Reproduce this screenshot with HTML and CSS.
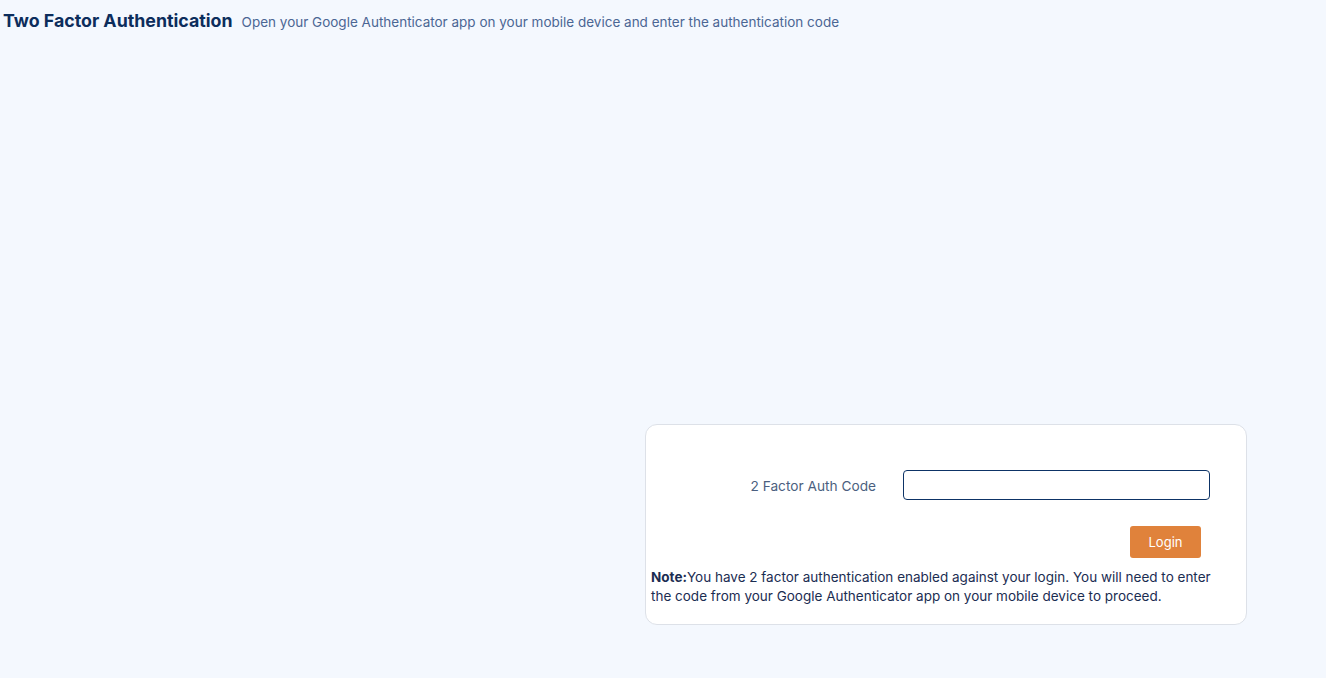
FILE: index.html
```html
<!DOCTYPE html>
<html lang="en">
<head>
    <meta charset="UTF-8">
    <meta name="viewport" content="width=device-width, initial-scale=1.0">
    <title>Two Factor Authentication</title>
    <link rel="stylesheet" href="styles.css">
</head>
<body>

    <div class="page-header">
        <h1>Two Factor Authentication</h1>
        <span class="subtitle">Open your Google Authenticator app on your mobile device and enter the authentication code</span>
    </div>

    <div class="auth-wrap">
        <div class="auth-card">
            <div class="form-row">
                <label for="authCode">2 Factor Auth Code</label>
                <input type="text" id="authCode">
            </div>
            <div class="btn-row">
                <button class="login-btn">Login</button>
            </div>
            <p class="note"><strong>Note:</strong>You have 2 factor authentication enabled against your login. You will need to enter the code from your Google Authenticator app on your mobile device to proceed.</p>
        </div>
    </div>

</body>
</html>
```

FILE: styles.css
```css
body {
    font-family: Inter, "Noto Sans", sans-serif;
    background-color: #f4f8fe;
    margin: 0;
    padding: 0;
}
.page-header {
    display: flex;
    align-items: baseline;
    padding: 10px 3px 0;
}
.page-header h1 {
    font-size: 17.8px;
    font-weight: 700;
    color: #0c2d5c;
    margin: 0 9px 0 0;
}
.subtitle {
    font-size: 13.5px;
    color: #4b6694;
}
.auth-wrap {
    display: flex;
    padding: 393px 0 0 645px;
}
.auth-card {
    width: 591px;
    background-color: white;
    border: 1px solid #dde1e8;
    border-radius: 12px;
    padding: 45px 4px 18px 5px;
}
.form-row {
    display: flex;
    align-items: center;
}
.form-row label {
    width: 225px;
    text-align: right;
    font-size: 13.7px;
    color: #4b5f80;
    margin: 1px 27px 0 0;
}
.form-row input {
    width: 303px;
    height: 26px;
    border: 1px solid #0d3366;
    border-radius: 4px;
    padding: 1px;
    margin: 0;
}
.btn-row {
    display: flex;
    padding: 26px 0 0 479px;
}
.login-btn {
    background-color: #e0823b;
    color: white;
    font-family: inherit;
    font-size: 13px;
    border: none;
    border-radius: 3px;
    width: 71px;
    height: 32px;
    cursor: pointer;
}
.note {
    font-size: 13.5px;
    line-height: 19px;
    color: #1b2d52;
    margin: 10px 0 0;
    width: 565px;
}
.note strong {
    font-weight: 700;
}
```
